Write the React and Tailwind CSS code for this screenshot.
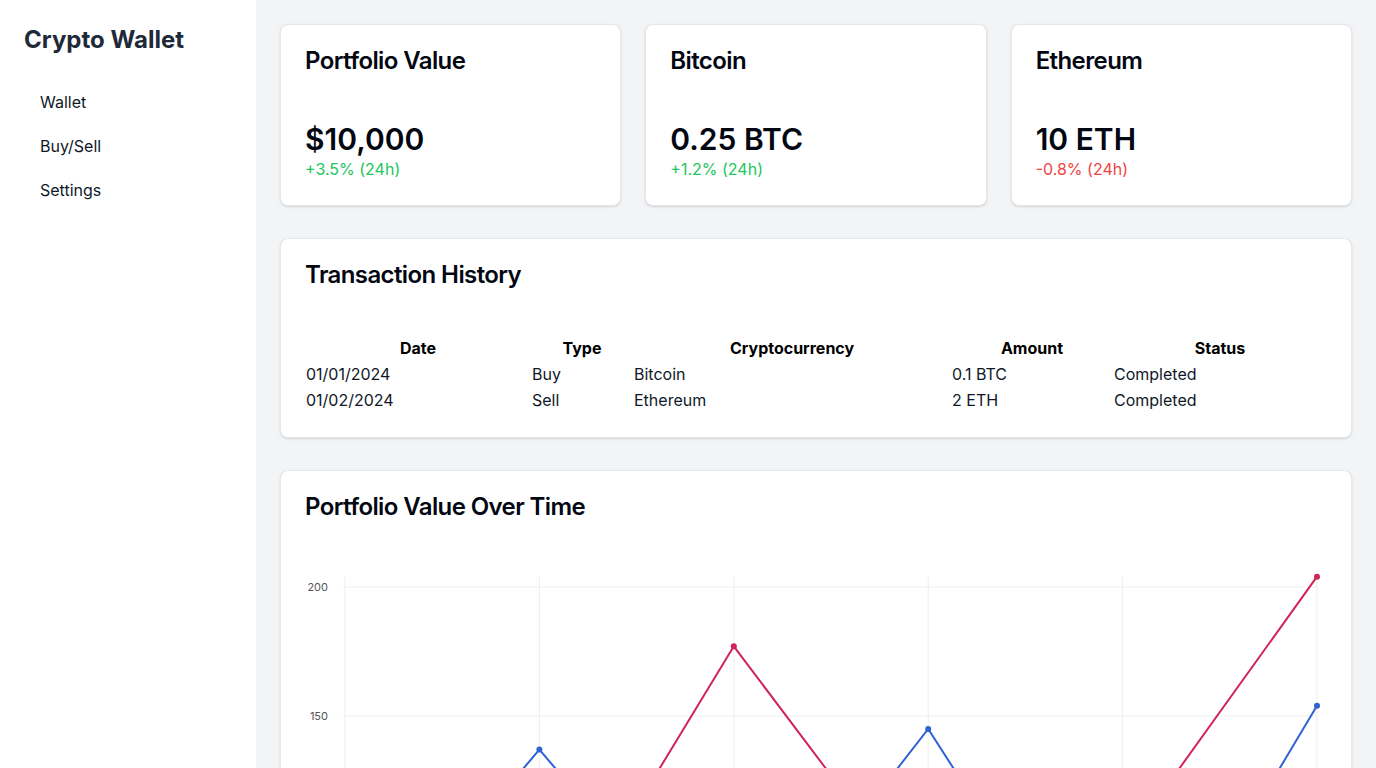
import { useState } from "react";

const assets = [
  { title: "Portfolio Value", value: "$10,000", change: "+3.5% (24h)", up: true },
  { title: "Bitcoin", value: "0.25 BTC", change: "+1.2% (24h)", up: true },
  { title: "Ethereum", value: "10 ETH", change: "-0.8% (24h)", up: false },
];

const transactions = [
  { date: "01/01/2024", type: "Buy", crypto: "Bitcoin", amount: "0.1 BTC", status: "Completed" },
  { date: "01/02/2024", type: "Sell", crypto: "Ethereum", amount: "2 ETH", status: "Completed" },
];

const labels = ["Jan", "Feb", "Mar", "Apr", "May", "Jun"];
const series = [
  { color: "#2f62d2", data: [48, 137, 48, 145, 27.5, 154] },
  { color: "#cf2455", data: [90, 53, 177, 77, 99, 204] },
];

function Card({ title, children }) {
  return (
    <div className="rounded-lg border border-gray-200 bg-white p-6 shadow-sm">
      <div className="text-2xl font-semibold leading-none tracking-tight text-gray-950">{title}</div>
      <div className="mt-12">{children}</div>
    </div>
  );
}

function Chart() {
  const left = 40;
  const step = 194.4;
  const y = (v) => 20 + (200 - v) * 2.58;
  const ticks = [200, 150, 100, 50];
  return (
    <svg width="1022" height="520" className="block">
      {ticks.map((t) => (
        <g key={t}>
          <line x1={left - 2} x2={left + step * 5} y1={y(t)} y2={y(t)} stroke="#efefef" />
          <text x="23" y={y(t) + 4} textAnchor="end" fontSize="11" fill="#555" fontFamily="Inter, sans-serif">
            {t}
          </text>
        </g>
      ))}
      {labels.map((l, i) => (
        <g key={l}>
          <line x1={left + step * i} x2={left + step * i} y1="10" y2={y(40)} stroke="#efefef" />
          <text x={left + step * i} y={y(40) + 18} textAnchor="middle" fontSize="11" fill="#555" fontFamily="Inter, sans-serif">
            {l}
          </text>
        </g>
      ))}
      {series.map((s) => (
        <g key={s.color}>
          <polyline
            fill="none"
            stroke={s.color}
            strokeWidth="2"
            points={s.data.map((v, i) => `${left + step * i},${y(v)}`).join(" ")}
          />
          {s.data.map((v, i) => (
            <circle key={i} cx={left + step * i} cy={y(v)} r="3" fill={s.color} />
          ))}
        </g>
      ))}
    </svg>
  );
}

export default function App() {
  const [active, setActive] = useState("Wallet");

  return (
    <div className="flex min-h-screen bg-gray-100 font-['Inter',sans-serif] text-gray-950">
      <aside className="w-64 shrink-0 bg-white p-6">
        <div className="text-2xl font-bold leading-8 text-gray-800">Crypto Wallet</div>
        <nav className="mt-[26px] flex flex-col gap-1">
          {["Wallet", "Buy/Sell", "Settings"].map((item) => (
            <button
              key={item}
              onClick={() => setActive(item)}
              className={`rounded px-4 py-2 text-left text-base text-gray-900 ${active === item ? "" : ""}`}
            >
              {item}
            </button>
          ))}
        </nav>
      </aside>

      <main className="flex flex-1 flex-col gap-8 p-6">
        <div className="grid grid-cols-3 gap-6">
          {assets.map((a) => (
            <Card key={a.title} title={a.title}>
              <div className="text-3xl font-semibold leading-9">{a.value}</div>
              <div className={a.up ? "text-[#22c55e]" : "text-[#ef4444]"}>{a.change}</div>
            </Card>
          ))}
        </div>

        <Card title="Transaction History">
          <table className="w-full table-fixed text-gray-900">
            <colgroup>
              <col className="w-[226px]" />
              <col className="w-[102px]" />
              <col className="w-[318px]" />
              <col className="w-[162px]" />
              <col />
            </colgroup>
            <thead>
              <tr className="h-[26px]">
                <th className="font-bold text-black">Date</th>
                <th className="font-bold text-black">Type</th>
                <th className="font-bold text-black">Cryptocurrency</th>
                <th className="font-bold text-black">Amount</th>
                <th className="font-bold text-black">Status</th>
              </tr>
            </thead>
            <tbody>
              {transactions.map((t) => (
                <tr key={t.date} className="h-[26px]">
                  <td className="px-px">{t.date}</td>
                  <td className="px-px">{t.type}</td>
                  <td className="px-px">{t.crypto}</td>
                  <td className="px-px">{t.amount}</td>
                  <td className="px-px">{t.status}</td>
                </tr>
              ))}
            </tbody>
          </table>
        </Card>

        <Card title="Portfolio Value Over Time">
          <Chart />
        </Card>
      </main>
    </div>
  );
}
